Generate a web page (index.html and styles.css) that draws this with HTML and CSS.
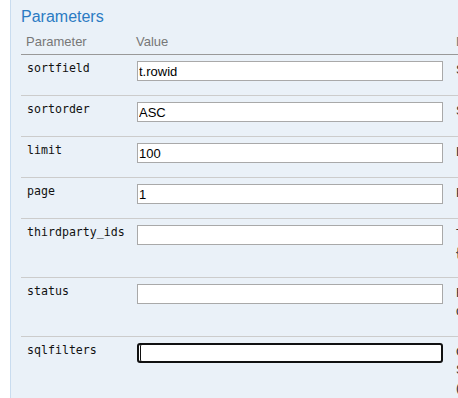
FILE: index.html
```html
<!DOCTYPE html>
<html lang="en">
<head>
<meta charset="utf-8">
<title>Parameters</title>
<link rel="stylesheet" href="styles.css">
</head>
<body>
<div class="panel">
  <h2 class="title">Parameters</h2>
  <table class="params">
    <colgroup>
      <col class="col-name">
      <col class="col-value">
      <col class="col-desc">
    </colgroup>
    <thead>
      <tr>
        <th>Parameter</th>
        <th>Value</th>
        <th class="desc-head">Description</th>
      </tr>
    </thead>
    <tbody>
      <tr>
        <td class="name">sortfield</td>
        <td class="value"><input class="field" type="text" value="t.rowid"></td>
        <td class="desc"><div class="desc-text"><span class="line">Sort field</span></div></td>
      </tr>
      <tr>
        <td class="name">sortorder</td>
        <td class="value"><input class="field" type="text" value="ASC"></td>
        <td class="desc"><div class="desc-text"><span class="line">Sort order</span></div></td>
      </tr>
      <tr>
        <td class="name">limit</td>
        <td class="value"><input class="field" type="text" value="100"></td>
        <td class="desc"><div class="desc-text"><span class="line">Limit for list</span></div></td>
      </tr>
      <tr>
        <td class="name">page</td>
        <td class="value"><input class="field" type="text" value="1"></td>
        <td class="desc"><div class="desc-text"><span class="line">Page number</span></div></td>
      </tr>
      <tr>
        <td class="name">thirdparty_ids</td>
        <td class="value"><input class="field" type="text" value=""></td>
        <td class="desc"><div class="desc-text"><span class="line">Thirdparty ids to filter orders of (example '1' or '1,2,3')</span><span class="line">{@pattern /^[0-9,]*$/i}</span></div></td>
      </tr>
      <tr>
        <td class="name">status</td>
        <td class="value"><input class="field" type="text" value=""></td>
        <td class="desc"><div class="desc-text"><span class="line">Filter by order status :</span><span class="line">draft | validated | closed</span></div></td>
      </tr>
      <tr>
        <td class="name">sqlfilters</td>
        <td class="value"><input class="field field-focus" type="text" value=""></td>
        <td class="desc"><div class="desc-text"><span class="line">Other criteria to filter answers separated by a comma.</span><span class="line">Syntax example "(t.ref:like:'SO-%') and</span><span class="line">(t.date_creation:&lt;:'20160101')"</span></div></td>
      </tr>
    </tbody>
  </table>
</div>
</body>
</html>
```

FILE: styles.css
```css
html, body {
  margin: 0;
  padding: 0;
  background: #ffffff;
  overflow: hidden;
}

body {
  font-family: "Liberation Sans", Arial, sans-serif;
  font-size: 13px;
  color: #333333;
}

.panel {
  margin-left: 10px;
  border-left: 1px solid #c9dcef;
  background: #eaf1f8;
  padding: 7px 0 0 10px;
  min-height: 100vh;
  width: 900px;
  box-sizing: border-box;
}

.title {
  margin: 0;
  font-size: 16px;
  line-height: 20px;
  font-weight: normal;
  color: #2b7bc3;
}

.params {
  border-collapse: collapse;
  table-layout: fixed;
  width: 880px;
}

.col-name { width: 110px; }
.col-value { width: 320px; }
.col-desc { width: 450px; }

.params th {
  text-align: left;
  font-weight: normal;
  color: #777777;
  font-size: 13px;
  line-height: 16px;
  padding: 7px 5px 4px;
  border-bottom: 1px solid #999999;
  white-space: nowrap;
}

.params td {
  vertical-align: top;
  padding: 6px 5px;
  border-bottom: 1px solid #cccccc;
}

.params td.name {
  font-family: "DejaVu Sans Mono", monospace;
  font-size: 11.6px;
  line-height: 15px;
  color: #111111;
  padding-left: 6px;
}

.params td.value {
  padding-left: 6px;
}

.field {
  display: block;
  box-sizing: border-box;
  width: 306px;
  height: 20px;
  margin: 0;
  padding: 0 2px 0 1px;
  border: 1px solid #a9a9a9;
  border-radius: 0;
  background: #ffffff;
  font-family: "Liberation Sans", Arial, sans-serif;
  font-size: 13px;
  color: #000000;
  outline: none;
}

.field-focus {
  border: 2px solid #111111;
  border-radius: 3px;
  box-shadow: inset 1px 0 0 #ffffff, inset 2px 0 0 #111111;
}

.desc-text {
  line-height: 18px;
  margin-bottom: 10px;
  color: #333333;
}

.line {
  display: block;
  white-space: nowrap;
}
```
